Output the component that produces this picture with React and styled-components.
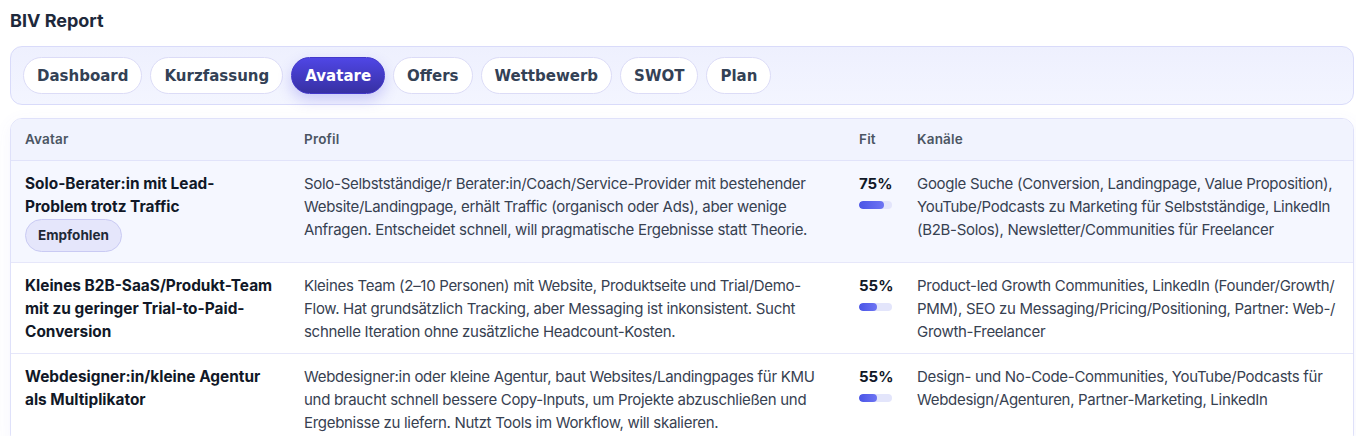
import React from 'react';
import styled, { createGlobalStyle } from 'styled-components';

const GlobalStyle = createGlobalStyle`
  html, body { margin: 0; padding: 0; background: #ffffff; }
  body { font-family: Inter, "Noto Sans", sans-serif; color: #1f2937; }
  * { box-sizing: border-box; }
`;

const tabs = ['Dashboard', 'Kurzfassung', 'Avatare', 'Offers', 'Wettbewerb', 'SWOT', 'Plan'];

const avatars = [
  {
    name: 'Solo-Berater:in mit Lead-Problem trotz Traffic',
    recommended: true,
    profile: 'Solo-Selbstständige/r Berater:in/Coach/Service-Provider mit bestehender Website/Landingpage, erhält Traffic (organisch oder Ads), aber wenige Anfragen. Entscheidet schnell, will pragmatische Ergebnisse statt Theorie.',
    fit: 75,
    channels: 'Google Suche (Conversion, Landingpage, Value Proposition), YouTube/Podcasts zu Marketing für Selbstständige, LinkedIn (B2B-Solos), Newsletter/Communities für Freelancer',
  },
  {
    name: 'Kleines B2B-SaaS/Produkt-Team mit zu geringer Trial-to-Paid-Conversion',
    profile: 'Kleines Team (2–10 Personen) mit Website, Produktseite und Trial/Demo-Flow. Hat grundsätzlich Tracking, aber Messaging ist inkonsistent. Sucht schnelle Iteration ohne zusätzliche Headcount-Kosten.',
    fit: 55,
    channels: 'Product-led Growth Communities, LinkedIn (Founder/Growth/PMM), SEO zu Messaging/Pricing/Positioning, Partner: Web-/Growth-Freelancer',
  },
  {
    name: 'Webdesigner:in/kleine Agentur als Multiplikator',
    profile: 'Webdesigner:in oder kleine Agentur, baut Websites/Landingpages für KMU und braucht schnell bessere Copy-Inputs, um Projekte abzuschließen und Ergebnisse zu liefern. Nutzt Tools im Workflow, will skalieren.',
    fit: 55,
    channels: 'Design- und No-Code-Communities, YouTube/Podcasts für Webdesign/Agenturen, Partner-Marketing, LinkedIn',
  },
];

// allow line breaks after slashes, like the original
const breakSlashes = text =>
  text.split('/').map((part, i, arr) => (
    <React.Fragment key={i}>
      {part}
      {i < arr.length - 1 && <>/<wbr /></>}
    </React.Fragment>
  ));

const Page = styled.div`
  padding: 9px 2px 0 10px;
`;

const Title = styled.h1`
  margin: 0 0 13px;
  font-size: 18px;
  line-height: 24px;
  font-weight: 700;
  color: #1e293b;
`;

const TabBar = styled.nav`
  display: flex;
  gap: 8px;
  padding: 10px 12px;
  background: linear-gradient(180deg, #eef0fe, #f3f5ff);
  border: 1px solid #d9dbfa;
  border-radius: 12px;
`;

const Tab = styled.button`
  margin: 0;
  height: 37px;
  padding: 0 13px;
  border-radius: 19px;
  font-family: "DejaVu Sans", sans-serif;
  font-size: 15px;
  font-weight: 700;
  cursor: pointer;
  border: 1px solid ${p => (p.$active ? '#4338ca' : '#dcdcf7')};
  color: ${p => (p.$active ? '#ffffff' : '#334155')};
  background: ${p => (p.$active ? 'linear-gradient(180deg, #4f46e5, #3730a3)' : '#ffffff')};
  box-shadow: ${p => (p.$active ? '0 6px 14px rgba(79, 70, 229, 0.25)' : 'none')};
`;

const TableCard = styled.div`
  margin-top: 13px;
  border: 1px solid #dfe1fa;
  border-radius: 12px;
  overflow: hidden;
  box-shadow: 0 4px 18px rgba(99, 102, 241, 0.06);
`;

const Table = styled.table`
  width: 100%;
  border-collapse: collapse;
  table-layout: fixed;
`;

const HeadCell = styled.th`
  text-align: left;
  padding: 0 14px;
  height: 41px;
  font-size: 13.5px;
  font-weight: 600;
  letter-spacing: 0.2px;
  color: #4b5563;
  background: #f1f3fe;
  border-bottom: 1px solid #e1e3fa;
  width: ${p => p.$w || 'auto'};
`;

const Row = styled.tr`
  background: ${p => (p.$highlight ? '#f5f7ff' : '#ffffff')};
  border-bottom: 1px solid #e6e7fa;
`;

const Cell = styled.td`
  vertical-align: top;
  padding: 11px 14px 10px;
  font-size: 15px;
  line-height: 23px;
  letter-spacing: -0.3px;
  color: #374151;
`;

const Name = styled.div`
  font-size: 15.4px;
  font-weight: 700;
  letter-spacing: 0;
  color: #111827;
`;

const Badge = styled.span`
  display: block;
  width: fit-content;
  margin-top: 1px;
  padding: 0 12px;
  height: 33px;
  line-height: 31px;
  border-radius: 17px;
  font-size: 13.5px;
  font-weight: 700;
  letter-spacing: 0;
  color: #1f2937;
  background: #e5e6fb;
  border: 1px solid #c9caf3;
`;

const FitValue = styled.div`
  font-weight: 700;
  letter-spacing: 0;
  color: #111827;
`;

const Bar = styled.div`
  margin-top: 6px;
  width: 33px;
  height: 8px;
  border-radius: 4px;
  background: #e3e5fb;
  overflow: hidden;
`;

const BarFill = styled.div`
  height: 100%;
  border-radius: 4px;
  background: linear-gradient(90deg, #4a55e6, #6d74f3);
`;

export default function App() {
  return (
    <Page>
      <GlobalStyle />
      <Title>BIV Report</Title>
      <TabBar>
        {tabs.map(t => (
          <Tab key={t} $active={t === 'Avatare'}>{t}</Tab>
        ))}
      </TabBar>
      <TableCard>
        <Table>
          <thead>
            <tr>
              <HeadCell $w="279px">Avatar</HeadCell>
              <HeadCell $w="555px">Profil</HeadCell>
              <HeadCell $w="58px">Fit</HeadCell>
              <HeadCell>Kanäle</HeadCell>
            </tr>
          </thead>
          <tbody>
            {avatars.map(a => (
              <Row key={a.name} $highlight={a.recommended}>
                <Cell>
                  <Name>{a.name}</Name>
                  {a.recommended && <Badge>Empfohlen</Badge>}
                </Cell>
                <Cell>{a.profile}</Cell>
                <Cell>
                  <FitValue>{a.fit}%</FitValue>
                  <Bar>
                    <BarFill style={{ width: `${a.fit}%` }} />
                  </Bar>
                </Cell>
                <Cell>{breakSlashes(a.channels)}</Cell>
              </Row>
            ))}
          </tbody>
        </Table>
      </TableCard>
    </Page>
  );
}
